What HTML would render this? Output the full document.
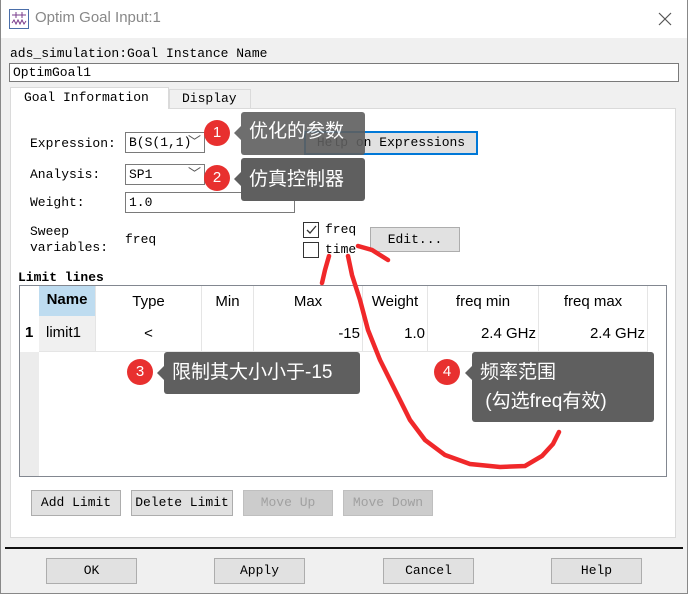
<!DOCTYPE html>
<html><head><meta charset="utf-8"><style>
*{box-sizing:border-box;margin:0;padding:0}
body{width:688px;height:594px;background:#f0f0f0;position:relative;overflow:hidden;font-family:"Liberation Mono","Noto Sans CJK SC",monospace;font-size:13px;color:#000}
.a{position:absolute;white-space:nowrap}
.btn{position:absolute;background:#e1e1e1;border:1px solid #adadad;text-align:center;line-height:23px}
.dis{color:#a0a0a0;background:#cccccc;border-color:#bfbfbf}
.box{position:absolute;background:#fff;border:1px solid #7a7a7a;padding-left:3px;line-height:18px}
.tip{position:absolute;background:#5f5f5f;color:#fff;font-family:"Liberation Sans","Noto Sans CJK SC",sans-serif;font-size:19px;border-radius:3px;padding-left:8px}
.tip:before{content:"";position:absolute;left:-7px;top:14px;border:7px solid transparent;border-left:0;border-right-color:#5f5f5f}
.num{position:absolute;width:26px;height:26px;border-radius:13px;background:#e8302f;color:#fff;font-family:"Liberation Sans",sans-serif;font-size:15px;text-align:center;line-height:26px}
.sans{font-family:"Liberation Sans",sans-serif;font-size:14px}
.cb{position:absolute;width:16px;height:16px;border:1px solid #333;background:#fff}
</style></head><body>
<div class="a" style="left:0;top:0;width:688px;height:38px;background:#fff"></div>
<svg class="a" style="left:9px;top:9px" width="20" height="20"><rect x="0.5" y="0.5" width="19" height="19" fill="#fff" stroke="#4a6ea9"/><path d="M3 6h14M7 3v6M13 3v6M3 14l2-3 2 4 2-4 2 4 2-4 2 4 2-3" stroke="#7a3c8c" fill="none"/></svg>
<div class="a" style="left:35px;top:9px;font-family:'Liberation Sans',sans-serif;font-size:15px;color:#888">Optim Goal Input:1</div>
<svg class="a" style="left:658px;top:12px" width="14" height="14"><path d="M1 1L13 13M13 1L1 13" stroke="#555" stroke-width="1.2"/></svg>
<div class="a" style="left:10px;top:46px">ads_simulation:Goal Instance Name</div>
<div class="box" style="left:9px;top:63px;width:670px;height:19px">OptimGoal1</div>
<div class="a" style="left:10px;top:108px;width:666px;height:430px;background:#fff;border:1px solid #dadada"></div>
<div class="a" style="left:10px;top:87px;width:159px;height:22px;background:#fff;border:1px solid #dadada;border-bottom:none;padding:2px 0 0 13px">Goal Information</div>
<div class="a" style="left:169px;top:89px;width:82px;height:19px;background:#f0f0f0;border:1px solid #dadada;border-bottom:none;padding:1px 0 0 12px">Display</div>
<div class="a" style="left:30px;top:136px">Expression:</div>
<div class="box" style="left:125px;top:132px;width:80px;height:21px;line-height:19px">B(S(1,1)<span style="position:absolute;right:3px;color:#555">﹀</span></div>
<div class="btn" style="left:304px;top:131px;width:174px;height:24px;border:2px solid #0078d7;line-height:20px">Help on Expressions</div>
<div class="a" style="left:30px;top:167px">Analysis:</div>
<div class="box" style="left:125px;top:164px;width:80px;height:21px;line-height:19px">SP1<span style="position:absolute;right:3px;color:#555">﹀</span></div>
<div class="a" style="left:30px;top:195px">Weight:</div>
<div class="box" style="left:125px;top:192px;width:170px;height:21px;line-height:19px">1.0</div>
<div class="a" style="left:30px;top:224px;line-height:16px">Sweep<br>variables:</div>
<div class="a" style="left:125px;top:232px">freq</div>
<div class="cb" style="left:303px;top:222px"><svg width="14" height="14"><path d="M3 7l3 3 6-7" stroke="#333" fill="none" stroke-width="1.3"/></svg></div>
<div class="a" style="left:325px;top:222px">freq</div>
<div class="cb" style="left:303px;top:242px"></div>
<div class="a" style="left:325px;top:242px">time</div>
<div class="btn" style="left:370px;top:227px;width:90px;height:25px">Edit...</div>
<div class="a" style="left:18px;top:270px;font-weight:bold">Limit lines</div>
<div class="a" style="left:19px;top:285px;width:648px;height:192px;border:1px solid #828790;background:#fff"></div>
<div class="a" style="left:20px;top:352px;width:19px;height:124px;background:#ececec"></div>
<div class="a sans" style="left:39px;top:286px;width:56px;height:30px;background:#bedcf0;font-weight:bold;text-align:center;line-height:28px;font-size:15px">Name</div>
<div class="a sans" style="left:39px;top:316px;width:56px;height:36px;background:#f0f0f0;line-height:34px;padding-left:7px;font-size:15px">limit1</div>
<div class="a sans" style="left:25px;top:316px;line-height:34px;font-weight:bold;font-size:15px">1</div>
<div class="a" style="left:95px;top:286px;width:1px;height:66px;background:#e5e5e5"></div>
<div class="a" style="left:201px;top:286px;width:1px;height:66px;background:#e5e5e5"></div>
<div class="a" style="left:253px;top:286px;width:1px;height:66px;background:#e5e5e5"></div>
<div class="a" style="left:362px;top:286px;width:1px;height:66px;background:#e5e5e5"></div>
<div class="a" style="left:427px;top:286px;width:1px;height:66px;background:#e5e5e5"></div>
<div class="a" style="left:538px;top:286px;width:1px;height:66px;background:#e5e5e5"></div>
<div class="a" style="left:647px;top:286px;width:1px;height:66px;background:#e5e5e5"></div>
<div class="a" style="left:39px;top:351px;width:609px;height:1px;background:#e5e5e5"></div>
<div class="a sans" style="left:96px;top:293px;width:105px;text-align:center;font-size:15px">Type</div>
<div class="a sans" style="left:202px;top:293px;width:51px;text-align:center;font-size:15px">Min</div>
<div class="a sans" style="left:254px;top:293px;width:108px;text-align:center;font-size:15px">Max</div>
<div class="a sans" style="left:363px;top:293px;width:64px;text-align:center;font-size:15px">Weight</div>
<div class="a sans" style="left:428px;top:293px;width:110px;text-align:center;font-size:15px">freq min</div>
<div class="a sans" style="left:539px;top:293px;width:108px;text-align:center;font-size:15px">freq max</div>
<div class="a sans" style="left:96px;top:325px;width:105px;text-align:center;font-size:15px">&lt;</div>
<div class="a sans" style="left:254px;top:325px;width:106px;text-align:right;font-size:15px">-15</div>
<div class="a sans" style="left:363px;top:325px;width:62px;text-align:right;font-size:15px">1.0</div>
<div class="a sans" style="left:428px;top:325px;width:108px;text-align:right;font-size:15px">2.4 GHz</div>
<div class="a sans" style="left:539px;top:325px;width:106px;text-align:right;font-size:15px">2.4 GHz</div>
<div class="btn" style="left:31px;top:490px;width:90px;height:26px">Add Limit</div>
<div class="btn" style="left:131px;top:490px;width:102px;height:26px">Delete Limit</div>
<div class="btn dis" style="left:243px;top:490px;width:90px;height:26px">Move Up</div>
<div class="btn dis" style="left:343px;top:490px;width:90px;height:26px">Move Down</div>
<div class="a" style="left:5px;top:547px;width:678px;height:2px;background:#111"></div>
<div class="btn" style="left:46px;top:558px;width:91px;height:26px">OK</div>
<div class="btn" style="left:214px;top:558px;width:91px;height:26px">Apply</div>
<div class="btn" style="left:383px;top:558px;width:91px;height:26px">Cancel</div>
<div class="btn" style="left:551px;top:558px;width:91px;height:26px">Help</div>
<div class="a" style="left:0;top:0;width:688px;height:594px;border:1px solid #888;border-top:none"></div>
<div class="tip" style="left:241px;top:112px;width:124px;height:43px;line-height:40px;opacity:.9">优化的参数</div>
<div class="num" style="left:204px;top:120px">1</div>
<div class="tip" style="left:241px;top:158px;width:124px;height:43px;line-height:43px">仿真控制器</div>
<div class="num" style="left:204px;top:165px">2</div>
<div class="tip" style="left:164px;top:352px;width:196px;height:42px;line-height:42px">限制其大小小于-15</div>
<div class="num" style="left:127px;top:359px">3</div>
<div class="tip" style="left:472px;top:352px;width:182px;height:70px;line-height:29px;padding-top:6px">频率范围<br>&nbsp;(勾选freq有效)</div>
<div class="num" style="left:434px;top:359px">4</div>
<svg class="a" style="left:0;top:0" width="688" height="594"><g stroke="#f0282a" stroke-width="4.5" fill="none" stroke-linecap="round">
<path d="M329 256 L325 270 L322 283"/>
<path d="M358 246 L372 250 L388 260"/>
<path d="M348 256 L352 275 L360 300 L368 330 L380 360 L395 390 L410 420 L425 440 L445 455 L470 464 L500 467 L525 466 L542 456 L553 444 L559 432"/>
</g></svg>
</body></html>
